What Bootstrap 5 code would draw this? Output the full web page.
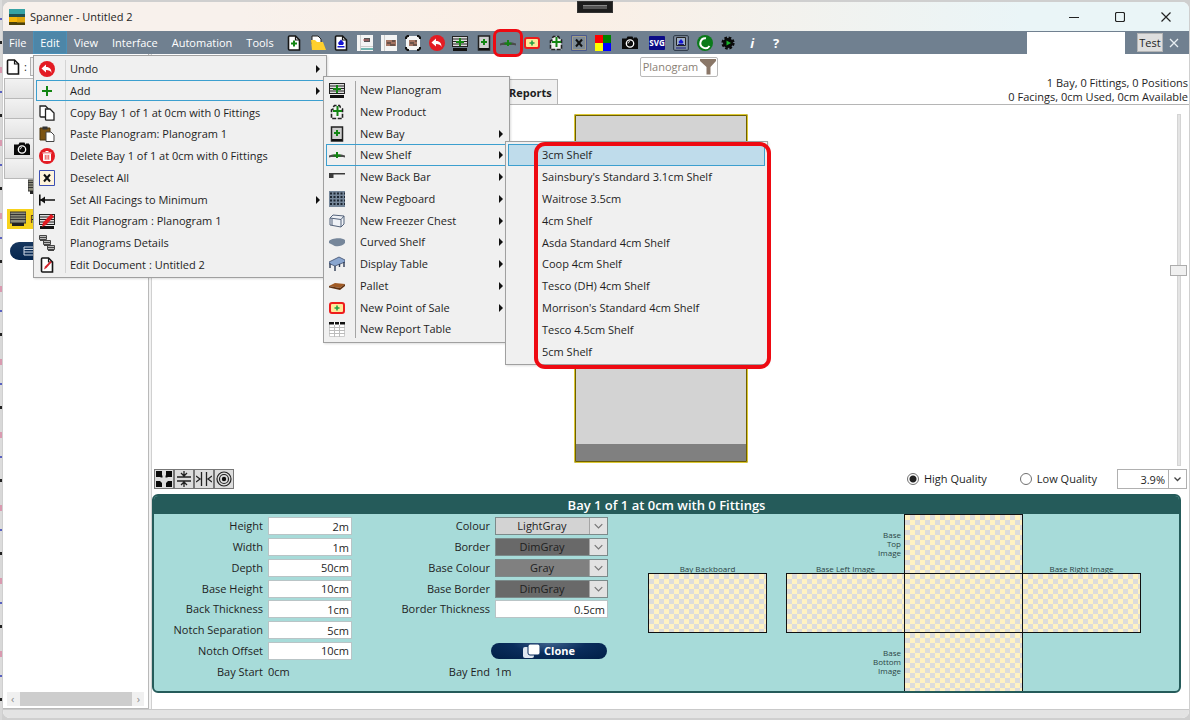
<!DOCTYPE html>
<html lang="en">
<head>
<meta charset="utf-8">
<meta name="viewport" content="width=device-width, initial-scale=1">
<title>Spanner - Untitled 2</title>
<link href="https://cdn.jsdelivr.net/npm/bootstrap@5.3.0/dist/css/bootstrap.min.css" rel="stylesheet">
<style>
  :root { --slate:#708090; --teal:#a7dbd9; --teal-dark:#255b5a; --menu:#f0f0f0; --edge:#a0a0a0; --hot:#3c9fcf; }
  body { font-family:"Open Sans","Noto Sans",sans-serif; font-size:11px; line-height:16px; color:#1e1e1e;
    padding:2px 1px 2px 3px; background:repeating-linear-gradient(#dcdcdc 0 18px,#5a62c0 18px 20px,#dcdcdc 20px 41px,#222 41px 44px,#d8d8d8 44px 67px,#d99ab0 67px 73px) left/2px 100% no-repeat #cfcfcf; }
  button, input, select { font:inherit; color:inherit; }
  svg { display:block; flex:none; }
  .ico { width:16px; height:16px; }
  .app-window { height:calc(100vh - 4px); min-height:600px; background:#fff; border-radius:7px; overflow:hidden; }
  .title-bar { height:29px; padding-left:6px; gap:5px; background:linear-gradient(90deg,#f8f1ec 20%,#fbefe5 48%,#eaf5f7 86%); }
  .title-bar button { width:46px; height:29px; border:0; background:none; display:grid; place-items:center; padding:0; }
  .notch { width:36px; height:12px; top:1px; left:50%; transform:translateX(-50%); background:#1c1c1c; border:1px solid #333; z-index:5; }
  .notch::after { content:""; position:absolute; inset:3px 5px; background:#555; border-top:1px solid #888; }
  .menu-bar { height:23px; background:var(--slate); }
  .top-item { height:23px; padding:0 7px; color:#fff; background:none; border:0; }
  .top-item.first { width:30px; padding:0 4px 0 6px; text-align:left; }
  .top-item.open { width:34px; background:#4d86a8; border:1px solid #4a90b8; padding:0; display:block; }
  .menu-titles { width:279px; }
  .tool-strip { width:506px; }
  .tool-strip button { flex:1 1 0; height:23px; padding:0; border:0; background:none; display:grid; place-items:center; position:relative; }
  .tool-strip .wide { flex:0 0 30px; }
  .tool-strip .glyph { font-size:13px; font-weight:700; color:#fff; }
  .ring { position:absolute; border:3px solid #ee0a12; border-radius:7px; inset:-2px -3px -3px; z-index:3; pointer-events:none; }
  .search-box { width:98px; height:22px; border:0; border-radius:0; background:#fff; }
  .test-btn { width:26px; height:19px; line-height:17px; margin-left:12px; padding:0; background:#dedede; border:1px solid #b5b5b5; }
  .close-btn { width:22px; height:22px; padding:0; border:0; background:none; display:grid; place-items:center; }

  .menu-pop { position:absolute; z-index:20; background:var(--menu); border:1px solid var(--edge); padding:2px; display:flex; flex-direction:column; margin:0; list-style:none; box-shadow:1px 1px 2px #0002; }
  .menu-pop > li { flex:1 1 0; position:relative; display:flex; }
  .menu-pop > li > button { flex:1; border:1px solid transparent; background:none; padding:1px 3px 0 2px; display:flex; align-items:center; text-align:left; white-space:nowrap; min-width:0; }
  .menu-pop > li > button > .ico { margin-right:15px; }
  .menu-pop > li > button.noicon { padding-left:33px; }
  .menu-pop > li > button.open { border-color:var(--hot); }
  .menu-pop > li > button.chosen { background:#bfdceb; border-color:var(--hot); }
  .menu-pop.ruled::before { content:""; position:absolute; left:31px; top:4px; bottom:4px; border-left:1px solid #d4d4d4; }
  .menu-pop.ruled.dark::before { border-color:#a5a5a5; }
  .more::after { content:""; margin-left:auto; border:4px solid transparent; border-left-color:#111; border-right:0; }
  .menu-edit { left:0; top:24px; width:294px; height:223px; }
  .menu-add { left:calc(100% - 1px); top:-4px; width:187px; height:267px; }
  .menu-shelf { left:calc(100% - 2px); top:-3px; width:263px; height:224px; }
  .menu-shelf::after { content:""; position:absolute; inset:0 -4px -5px 28px; border:4px solid #ee0a12; border-radius:11px; pointer-events:none; }

  .side { width:146px; border-right:1px solid #b9b9b9; border-bottom:1px solid #b9b9b9; padding-left:1px; }
  .splitter { width:3px; background:#f2f2f2; border-right:1px solid #d0d0d0; }
  .doc-row { height:25px; padding-left:1px; gap:3px; }
  .doc-name { width:110px; height:19px; border:1px solid #b0b0b0; border-radius:0; background:#f0f0f0; padding:0 3px; }
  .side-btn { height:21px; margin-top:-1px; border:1px solid #b9b9b9; background:linear-gradient(#f2f2f2,#e2e2e2); padding:0 0 0 9px; }
  .tree-top { padding:0 0 14px 24px; }
  .tree-sel { background:#f7d21b; height:20px; width:120px; margin-left:3px; padding-left:3px; gap:4px; }
  .tree-pill { height:18px; width:120px; background:linear-gradient(#17375e,#04264f); border-radius:9px; margin:13px 0 0 6px; padding-left:12px; }
  .hscroll { height:14px; margin:0 4px 2px 3px; background:#f0f0f0; color:#8a8a8a; }
  .hscroll i { background:#cdcdcd; height:14px; flex:0 1 112px; }

  .filter-row { height:25px; padding-left:17px; }
  .filter-box { height:20px; border:1px solid #b9b9b9; border-radius:2px; color:#8a7f75; background:#fff; padding:0 1px 0 2px; gap:2px; }
  .tab-row { height:26px; border-bottom:1px solid #b5b5b5; padding-left:340px; }
  .tab-rep { border:1px solid #b5b5b5; border-bottom:0; background:#f0f0f0; font-weight:700; padding:2px 5px 0 16px; height:25px; }
  .tallies { font-size:11px; line-height:14px; margin-top:-3px; padding-right:1px; }
  .bay { height:100%; aspect-ratio:1/2; background:#d3d3d3; border:2px solid #6e5f00; outline:1px solid #dcc832; outline-offset:-1px; border-radius:2px; }
  .bay div { height:17px; background:#808080; }
  .canvas-row { min-height:0; padding-top:9px; }
  .bay-space { padding:0 0 3px 2px; }
  .vslide { width:21px; }
  .vslide .groove { width:4px; background:#e4e4e4; border:1px solid #d4d4d4; }
  .vslide .knob { width:17px; height:11px; top:43%; background:#f0f0f0; border:1px solid #acacac; }
  .view-row { padding:3px 2px 5px; }
  .grid-btns button { width:20px; height:20px; border:1px solid #777; background:#ddd; padding:0; display:grid; place-items:center; }
  .quality { gap:5px; margin-right:20px; }
  .quality + .quality { margin-left:13px; }
  .quality input { appearance:none; width:12px; height:12px; margin:0; border:1px solid #707070; border-radius:50%; background:#fff; }
  .quality input:checked { background:radial-gradient(#222 0 3px,#fff 4px); }
  .zoom-in { width:52px; height:20px; border:1px solid #b0b0b0; border-radius:0; text-align:right; padding:0 3px; }
  .zoom-dd { width:18px; height:20px; border:1px solid #b0b0b0; border-left:0; background:#fff; padding:0; display:grid; place-items:center; }

  .props { border:2px solid var(--teal-dark); border-radius:6px; background:var(--teal); overflow:hidden; margin-right:8px; }
  .props h2 { background:var(--teal-dark); color:#fff; font-size:13px; line-height:18px; font-weight:600; margin:0; text-align:center; }
  .fields { display:grid; grid-template-rows:repeat(8,1fr); height:166px; align-items:center; column-gap:5px; margin-top:2px; }
  .fields label, .fields span { text-align:right; }
  .fields .plain { text-align:left; }
  .fields-a { grid-template-columns:109px 84px; }
  .fields-b { grid-template-columns:100px 113px; margin-left:38px; }
  .fields input { width:100%; height:18px; border:1px solid #b9c4c6; border-radius:0; background:#fff; text-align:right; padding:0 2px; }
  .pick { position:relative; height:18px; }
  .pick select { width:100%; height:18px; line-height:16px; appearance:none; border:1px solid #7b8a8a; border-radius:0; padding:0 19px 0 0; text-align:center; text-align-last:center; display:block; }
  .pick svg { position:absolute; right:1px; top:1px; width:18px; height:16px; background:#e2e2e2; border-left:1px solid #a5a5a5; pointer-events:none; }
  .clone { width:116px; height:16px; line-height:16px; margin-left:-4px; border:0; border-radius:8px; color:#fff; font-weight:700; padding:0; background:radial-gradient(ellipse at 50% 0,#3d618c 0,#0a2d5c 45%,#001f47); }
  .faces { display:grid; grid-template-columns:118px 20px repeat(3,118px); grid-template-rows:repeat(3,59px); margin-left:40px; font-size:8px; line-height:9px; color:#2c4444; }
  .face { position:relative; margin:0 -1px -1px 0; border:1px solid #111; background:repeating-conic-gradient(#dcdcdc 0 25%,#fff2c2 0 50%) 0 0/10px 10px; }
  .cap { position:absolute; bottom:100%; left:0; right:0; text-align:center; padding-bottom:1px; }
  .cap-side { align-self:center; text-align:right; padding-right:3px; }
  .main-end { height:16px; }
  .foot { height:9px; background:#e3e3e3; border-top:1px solid #c9c9c9; }
</style>
</head>
<body>

<svg width="0" height="0" class="position-absolute" aria-hidden="true">
  <symbol id="plus" viewBox="0 0 16 16"><path d="M8 3v10M3 8h10" stroke="#128512" stroke-width="2"/></symbol>
  <symbol id="page" viewBox="0 0 16 16"><path d="M3.500 1h6l4 4v10h-10q-1 0-1-1V2q0-1 1-1z" fill="#fff" stroke="#161616" stroke-width="1.600"/><path d="M9.500 1v4h4" fill="none" stroke="#161616" stroke-width="1.200"/></symbol>
  <symbol id="newdoc" viewBox="0 0 16 16"><use href="#page"/><path d="M8 5.500v6M5 8.500h6" stroke="#128512" stroke-width="2"/></symbol>
  <symbol id="folder" viewBox="0 0 16 16"><path d="M2 1h6l3 3v5H2z" fill="#fff" stroke="#222"/><path d="M1 5h4l2 2h6l3 8H2z" fill="#ffd02e"/></symbol>
  <symbol id="savedoc" viewBox="0 0 16 16"><use href="#page"/><path d="M8 4.500l3 3.500-1 2H6L5 8zM4.500 11h7v1.500h-7z" fill="#1414d2"/></symbol>
  <symbol id="sheet1" viewBox="0 0 16 16"><path d="M0 0h16v16H0z" fill="#f4f4f4"/><path d="M3.500 0v16M3 11.500h13" stroke="#ccc"/><path d="M7 3h6v4H7z" fill="#555"/><path d="M4 13h12v2H4z" fill="#6fb5b0"/><path d="M6 5h6" stroke="#c66"/></symbol>
  <symbol id="sheet2" viewBox="0 0 16 16"><path d="M0 0h16v16H0z" fill="#f4f4f4"/><path d="M3.500 0v16" stroke="#ccc"/><path d="M5 5h10v6H5z" fill="#a47463"/><path d="M6 8h4m1-2h3M9 10h5" stroke="#333"/></symbol>
  <symbol id="sheet3" viewBox="0 0 16 16"><path d="M1 1h14v14H1z" fill="#f4f4f4"/><path d="M4 5h8v6H4z" fill="#a47463"/><path d="M5 8h4m1-2h2M8 10h4" stroke="#333"/><path d="M1 4V2.500L2.500 1H4m8 0h1.500L15 2.500V4m0 8v1.500L13.500 15H12m-8 0H2.500L1 13.500V12" fill="none" stroke="#111" stroke-width="2"/></symbol>
  <symbol id="undo" viewBox="0 0 16 16"><circle cx="8" cy="8" r="8" fill="#e31b23"/><path d="M7 3.500V6c4 0 5.500 2.500 5.500 6C11.500 9.800 10 9 7 9v2.500L2.500 7.500z" fill="#fff"/></symbol>
  <symbol id="plano" viewBox="0 0 16 16"><path d="M0 1h16v11H0z" fill="#ddd"/><path d="M0 1.500h16M0 4h16M0 6.500h16M0 9h16M0 11.500h16M.5 1v11M15.500 1v11" stroke="#222"/><path d="M1 13h14v3H1z" fill="#111"/><path d="M8 3v8M4 7h8" stroke="#128512" stroke-width="2"/></symbol>
  <symbol id="bay" viewBox="0 0 16 16"><path d="M2.500 1h11v14h-11z" fill="#cfcfcf" stroke="#222" stroke-width="1.500"/><path d="M3 13h10v2H3z" fill="#111"/><path d="M8 4v6M5 7h6" stroke="#128512" stroke-width="2"/></symbol>
  <symbol id="shelf" viewBox="0 0 16 16"><path d="M0 8.500L3.500 7.500h9L16 8.500v2L14 10H2l-2 .5z" fill="#4c4c4c"/><path d="M8 5v6M4.500 8.500h7" stroke="#128512" stroke-width="2"/></symbol>
  <symbol id="pos" viewBox="0 0 16 16"><rect x="1" y="3" width="14" height="10" rx="2" fill="#ffe89a" stroke="#ee1c1c" stroke-width="2"/><path d="M8 5.500v5M5.500 8h5" stroke="#22a045" stroke-width="1.600"/></symbol>
  <symbol id="product" viewBox="0 0 16 16"><path d="M4 5l-1.500 1v8.500h11V5l-2-1.500-1-2h-5L4 3.500z" fill="#f2f2f2" stroke="#222" stroke-width="1.600" stroke-dasharray="4 1.500"/><path d="M8.500 2v10M4 7h9" stroke="#128512" stroke-width="2"/></symbol>
  <symbol id="desel" viewBox="0 0 16 16"><path d="M.5.5h15v15H.5z" fill="#fff4dc" stroke="#3b4fb4"/><path d="M5 4.500l6 7M11 4.500l-6 7" stroke="#111" stroke-width="2"/></symbol>
  <symbol id="deselbar" viewBox="0 0 16 16"><path d="M.5.5h15v15H.5z" fill="#7d8a96" stroke="#4a5a90"/><path d="M1.500 1.500h13v13h-13z" fill="none" stroke="#a39c88"/><path d="M5 4.500l6 7M11 4.500l-6 7" stroke="#111" stroke-width="2"/></symbol>
  <symbol id="four" viewBox="0 0 16 16"><path d="M0 0h8v8H0z" fill="#f00"/><path d="M8 0h8v8H8z" fill="#008000"/><path d="M0 8h8v8H0z" fill="#ff0"/><path d="M8 8h8v8H8z" fill="#00f"/></symbol>
  <symbol id="camera" viewBox="0 0 16 16"><path d="M0 3.500h4.500l1-2h5l1 2H12V2.500h3v1h1V14H0z" fill="#0a0a0a"/><circle cx="8" cy="8.500" r="3.700" fill="none" stroke="#fff" stroke-width="1.300"/><path d="M8 6.500a2 2 0 0 0-2 2" stroke="#fff" fill="none" stroke-width=".8"/></symbol>
  <symbol id="monitor" viewBox="0 0 16 16"><rect x=".7" y=".7" width="14.600" height="14.600" rx="1" fill="#8390a0" stroke="#222e3c"/><path d="M3.500 2.500h9v8h-9z" fill="#9fb0c8" stroke="#222"/><path d="M8 4l2.500 3-1 1.500h-3L5.500 7z" fill="#1414d2"/><path d="M5 9.500h6M3 13h10" stroke="#1c1c80" stroke-width="1.200"/></symbol>
  <symbol id="greenc" viewBox="0 0 16 16"><circle cx="8" cy="8" r="8" fill="#0a7a1a"/><path d="M9 3.200A5 5 0 1 0 12.500 11" fill="none" stroke="#fff" stroke-width="2"/></symbol>
  <symbol id="gear" viewBox="0 0 16 16"><circle cx="8" cy="8" r="5" fill="#0a0a0a"/><circle cx="8" cy="8" r="5.400" fill="none" stroke="#0a0a0a" stroke-width="2.400" stroke-dasharray="2.600 1.640"/><path d="M6.500 5.500L11 8l-4.500 2.500z" fill="#19b52a"/></symbol>
  <symbol id="copy" viewBox="0 0 16 16"><path d="M1 1h5.500L9 3.500V12H2q-1 0-1-1z" fill="#fff" stroke="#222" stroke-width="1.300"/><path d="M6.500 4H11l4 4v7.200H7.500q-1 0-1-1z" fill="#fff" stroke="#222" stroke-width="1.300"/></symbol>
  <symbol id="paste" viewBox="0 0 16 16"><path d="M1 2h10v12H1z" fill="#7b5312" stroke="#4a340c"/><path d="M3.500.5h5v3h-5z" fill="#333"/><path d="M7 6h5l3 3v6.500H7z" fill="#fff" stroke="#444"/></symbol>
  <symbol id="bin" viewBox="0 0 16 16"><circle cx="8" cy="8" r="8" fill="#e31b23"/><path d="M3.500 5h9M4.500 6h7v6.500h-7zM6.500 3.500h3" fill="#f9d5d7" stroke="#fff"/><path d="M6.500 7v4.500M8 7v4.500M9.500 7v4.500" stroke="#e77"/></symbol>
  <symbol id="facing" viewBox="0 0 16 16"><path d="M.8 2.500v11M1 8h15" stroke="#111" stroke-width="1.600"/><path d="M1 8l5-3.500v7z" fill="#111"/></symbol>
  <symbol id="editpl" viewBox="0 0 16 16"><path d="M0 1h16v11H0z" fill="#ddd"/><path d="M0 1.500h16M0 4h16M0 6.500h16M0 9h16M0 11.500h16M.5 1v11M15.500 1v11" stroke="#222"/><path d="M1 13h14v3H1z" fill="#111"/><path d="M3 14l1-4.500 8-8.500 3 2.500L7 12z" fill="#e11b22"/></symbol>
  <symbol id="details" viewBox="0 0 16 16"><g fill="#bbb" stroke="#444"><path d="M.5.5h7v4h-7zM4.500 5.500h7v4h-7zM8.500 10.500h7v4h-7z"/><path d="M1 2.500h6M5 7.500h6M9 12.500h6"/></g><path d="M1 4h6v2H1zM5 9h6v2H5zM9 14h6v2H9z" fill="#444"/></symbol>
  <symbol id="editdoc" viewBox="0 0 16 16"><use href="#page"/><path d="M5 12.500l1-3 5.500-5.500 1.200 1.200L7.500 11z" fill="#d3222a"/></symbol>
  <symbol id="backbar" viewBox="0 0 16 16"><path d="M0 4h16v1.500H4.500V9H0z" fill="#3a3a3a"/></symbol>
  <symbol id="peg" viewBox="0 0 16 16"><path d="M0 0h16v16H0z" fill="#76879a"/><path d="M0 2.500h16M0 6h16M0 9.500h16M0 13h16" stroke="#1c2632" stroke-width="1.800" stroke-dasharray="2 1.500" stroke-dashoffset="-1"/></symbol>
  <symbol id="freezer" viewBox="0 0 16 16"><path d="M1 5l3-3 11 1v8l-3 3L1 12zM1 5l11 1.500V14M12 6.500L15 3M3 5.500V12" fill="#eef1f6" stroke="#53627a"/></symbol>
  <symbol id="curved" viewBox="0 0 16 16"><path d="M0 7c2-3 13-4 16-1v3c-3 4-10 4-12 2L0 9z" fill="#76869a"/></symbol>
  <symbol id="dtable" viewBox="0 0 16 16"><path d="M0 6l10-5 6 3v2L6 10 0 7.500z" fill="#8aa6cf" stroke="#3c4d6c" stroke-width=".8"/><path d="M1 7.500V12M6 10v5M15 6v5M10.500 8v3" stroke="#2d3a54" stroke-width="1.400"/></symbol>
  <symbol id="pallet" viewBox="0 0 16 16"><path d="M0 8l6-3 10 1-5 4z" fill="#a05a24"/><path d="M0 8l11 2 5-4v2l-5 4L0 9.500z" fill="#5e2f0e"/></symbol>
  <symbol id="rtable" viewBox="0 0 16 16"><path d="M.5 1.500h15v14H.5z" fill="#fff" stroke="#ccc"/><path d="M0 6.500h16M0 9.500h16M0 12.500h16M5.500 3v13M10.500 3v13" stroke="#bbb"/><path d="M0 1h16v2.500H0z" fill="#111"/><path d="M5.500 1v3M10.500 1v3" stroke="#fff"/></symbol>
  <symbol id="rack" viewBox="0 0 16 16"><path d="M0 1h16v11H0z" fill="#8b8b7a" stroke="#333"/><path d="M0 3.500h16M0 6h16M0 8.500h16" stroke="#333"/><path d="M2 12h12v3H2z" fill="#222"/></symbol>
</svg>

<div class="notch position-absolute"></div>

<div class="app-window d-flex flex-column">
  <header class="title-bar d-flex align-items-center">
    <svg width="16" height="16" viewBox="0 0 16 16"><path d="M0 0h16v6H0z" fill="#38a3a5"/><path d="M0 5h16v3H0z" fill="#23504f"/><path d="M0 8h16v6H0z" fill="#f5b50a"/><path d="M0 13h16v3H0z" fill="#4d420c"/><path d="M8 8h8v6H8z" fill="#c9960c" opacity=".5"/></svg>
    <span>Spanner - Untitled 2</span>
    <div class="ms-auto d-flex">
      <button aria-label="Minimise"><svg width="10" height="10"><path d="M0 5.500h10" stroke="#222"/></svg></button>
      <button aria-label="Maximise"><svg width="10" height="10"><rect x=".5" y=".5" width="9" height="9" rx="1.500" fill="none" stroke="#222" stroke-width="1.200"/></svg></button>
      <button aria-label="Close"><svg width="10" height="10"><path d="M.5.5l9 9M9.500.5l-9 9" stroke="#222" stroke-width="1.200"/></svg></button>
    </div>
  </header>

  <nav class="menu-bar d-flex align-items-center">
    <div class="menu-titles d-flex">
      <button class="top-item first">File</button>
      <div class="position-relative">
        <button class="top-item open">Edit</button>
        <ul class="menu-pop menu-edit ruled">
          <li><button class="more"><svg class="ico"><use href="#undo"/></svg>Undo</button></li>
          <li><button class="more open"><svg class="ico"><use href="#plus"/></svg>Add</button>
            <ul class="menu-pop menu-add ruled dark">
              <li><button><svg class="ico"><use href="#plano"/></svg>New Planogram</button></li>
              <li><button><svg class="ico"><use href="#product"/></svg>New Product</button></li>
              <li><button class="more"><svg class="ico"><use href="#bay"/></svg>New Bay</button></li>
              <li><button class="more open"><svg class="ico"><use href="#shelf"/></svg>New Shelf</button>
                <ul class="menu-pop menu-shelf">
                  <li><button class="noicon chosen">3cm Shelf</button></li>
                  <li><button class="noicon">Sainsbury's Standard 3.1cm Shelf</button></li>
                  <li><button class="noicon">Waitrose 3.5cm</button></li>
                  <li><button class="noicon">4cm Shelf</button></li>
                  <li><button class="noicon">Asda Standard 4cm Shelf</button></li>
                  <li><button class="noicon">Coop 4cm Shelf</button></li>
                  <li><button class="noicon">Tesco (DH) 4cm Shelf</button></li>
                  <li><button class="noicon">Morrison's Standard 4cm Shelf</button></li>
                  <li><button class="noicon">Tesco 4.5cm Shelf</button></li>
                  <li><button class="noicon">5cm Shelf</button></li>
                </ul>
              </li>
              <li><button class="more"><svg class="ico"><use href="#backbar"/></svg>New Back Bar</button></li>
              <li><button class="more"><svg class="ico"><use href="#peg"/></svg>New Pegboard</button></li>
              <li><button class="more"><svg class="ico"><use href="#freezer"/></svg>New Freezer Chest</button></li>
              <li><button class="more"><svg class="ico"><use href="#curved"/></svg>Curved Shelf</button></li>
              <li><button class="more"><svg class="ico"><use href="#dtable"/></svg>Display Table</button></li>
              <li><button class="more"><svg class="ico"><use href="#pallet"/></svg>Pallet</button></li>
              <li><button class="more"><svg class="ico"><use href="#pos"/></svg>New Point of Sale</button></li>
              <li><button><svg class="ico"><use href="#rtable"/></svg>New Report Table</button></li>
            </ul>
          </li>
          <li><button><svg class="ico"><use href="#copy"/></svg>Copy Bay 1 of 1 at 0cm with 0 Fittings</button></li>
          <li><button><svg class="ico"><use href="#paste"/></svg>Paste Planogram: Planogram 1</button></li>
          <li><button><svg class="ico"><use href="#bin"/></svg>Delete Bay 1 of 1 at 0cm with 0 Fittings</button></li>
          <li><button><svg class="ico"><use href="#desel"/></svg>Deselect All</button></li>
          <li><button class="more"><svg class="ico"><use href="#facing"/></svg>Set All Facings to Minimum</button></li>
          <li><button><svg class="ico"><use href="#editpl"/></svg>Edit Planogram : Planogram 1</button></li>
          <li><button><svg class="ico"><use href="#details"/></svg>Planograms Details</button></li>
          <li><button><svg class="ico"><use href="#editdoc"/></svg>Edit Document : Untitled 2</button></li>
        </ul>
      </div>
      <button class="top-item">View</button>
      <button class="top-item">Interface</button>
      <button class="top-item">Automation</button>
      <button class="top-item">Tools</button>
    </div>
    <div class="tool-strip d-flex">
      <button aria-label="New"><svg class="ico"><use href="#newdoc"/></svg></button>
      <button aria-label="Open"><svg class="ico"><use href="#folder"/></svg></button>
      <button aria-label="Save"><svg class="ico"><use href="#savedoc"/></svg></button>
      <button aria-label="Layout"><svg class="ico"><use href="#sheet1"/></svg></button>
      <button aria-label="Side view"><svg class="ico"><use href="#sheet2"/></svg></button>
      <button aria-label="Full view"><svg class="ico"><use href="#sheet3"/></svg></button>
      <button aria-label="Undo"><svg class="ico"><use href="#undo"/></svg></button>
      <button aria-label="New planogram"><svg class="ico"><use href="#plano"/></svg></button>
      <button aria-label="New bay"><svg class="ico"><use href="#bay"/></svg></button>
      <button aria-label="New shelf"><svg class="ico"><use href="#shelf"/></svg><span class="ring"></span></button>
      <button aria-label="New point of sale"><svg class="ico"><use href="#pos"/></svg></button>
      <button aria-label="New product"><svg class="ico"><use href="#product"/></svg></button>
      <button aria-label="Deselect"><svg class="ico"><use href="#deselbar"/></svg></button>
      <button aria-label="Colours"><svg class="ico"><use href="#four"/></svg></button>
      <button aria-label="Snapshot" class="wide"><svg class="ico"><use href="#camera"/></svg></button>
      <button aria-label="SVG"><svg class="ico" viewBox="0 0 16 16"><rect y="1" width="16" height="14" rx="1" fill="#0b0b86"/><text x="8" y="11" text-anchor="middle" font-size="8" font-weight="700" fill="#fff">SVG</text></svg></button>
      <button aria-label="Monitor"><svg class="ico"><use href="#monitor"/></svg></button>
      <button aria-label="Refresh"><svg class="ico"><use href="#greenc"/></svg></button>
      <button aria-label="Run"><svg class="ico"><use href="#gear"/></svg></button>
      <button class="glyph fst-italic">i</button>
      <button class="glyph">?</button>
    </div>
    <input class="search-box ms-auto" aria-label="Search">
    <button class="test-btn">Test</button>
    <button class="close-btn" aria-label="Close test"><svg width="10" height="10"><path d="M1 1l8 8M9 1L1 9" stroke="#e8eef2" stroke-width="1.300"/></svg></button>
    <span class="ps-1"></span>
  </nav>

  <div class="d-flex flex-grow-1">
    <aside class="side d-flex flex-column">
      <div class="doc-row d-flex align-items-center">
        <svg class="ico"><use href="#page"/></svg><span>:</span>
        <input class="doc-name" value="Untitled 2" aria-label="Document name">
      </div>
      <button class="side-btn" aria-label="Tool 1"></button>
      <button class="side-btn" aria-label="Tool 2"></button>
      <button class="side-btn" aria-label="Tool 3"></button>
      <button class="side-btn" aria-label="Camera"><svg class="ico"><use href="#camera"/></svg></button>
      <button class="side-btn" aria-label="Tool 5"></button>
      <div class="tree-top"><svg class="ico"><use href="#rack"/></svg></div>
      <div class="tree-sel d-flex align-items-center"><svg class="ico"><use href="#rack"/></svg>P</div>
      <div class="tree-pill d-flex align-items-center"><svg width="14" height="12"><path d="M2 2h12v8H2zM2 4.500h12M2 7h12" fill="none" stroke="#cfd9e6"/></svg></div>
      <div class="hscroll d-flex justify-content-between align-items-center mt-auto px-1"><span>‹</span><i></i><span>›</span></div>
    </aside>
    <div class="splitter"></div>

    <main class="flex-grow-1 d-flex flex-column">
      <div class="filter-row d-flex justify-content-center align-items-center">
        <button class="filter-box d-flex align-items-center">Planogram<svg width="16" height="16"><path d="M0 0h16v2l-5.500 6v7.500h-4V8L0 2z" fill="#8a7768"/></svg></button>
      </div>
      <div class="tab-row d-flex justify-content-between">
        <button class="tab-rep">Reports</button>
        <div class="tallies text-end">1 Bay, 0 Fittings, 0 Positions<br>0 Facings, 0cm Used, 0cm Available</div>
      </div>
      <section class="canvas-row flex-grow-1 d-flex">
        <div class="bay-space flex-grow-1 d-flex justify-content-center">
          <div class="bay d-flex flex-column justify-content-end"><div></div></div>
        </div>
        <div class="vslide d-flex position-relative justify-content-center">
          <div class="groove"></div><div class="knob position-absolute"></div>
        </div>
      </section>
      <div class="view-row d-flex align-items-center">
        <div class="grid-btns d-flex">
          <button aria-label="Fit"><svg class="ico"><path d="M0 0h6v4l2 2-2 2-2-2H0zM16 0h-6v4L8 6l2 2 2-2h4zM0 16h6v-4l-2-2H0zM16 16h-6v-4l2-2h4z" fill="#0a0a0a"/><path d="M8 0v16M0 8h16" stroke="#ddd" stroke-width="3"/></svg></button>
          <button aria-label="Squeeze vertically"><svg class="ico"><path d="M1 6h14M1 10h14M8 0v5M5 2l3 3 3-3M8 16v-5M5 14l3-3 3 3" stroke="#222" fill="none" stroke-width="1.300"/></svg></button>
          <button aria-label="Squeeze horizontally"><svg class="ico"><path d="M5.500 1v14M10.500 1v14M0 5l4 3-4 3M16 5l-4 3 4 3" stroke="#222" fill="none" stroke-width="1.300"/></svg></button>
          <button aria-label="Target"><svg class="ico"><g fill="none" stroke="#222" stroke-width="1.200"><circle cx="8" cy="8" r="7"/><circle cx="8" cy="8" r="4.500"/></g><circle cx="8" cy="8" r="2.200" fill="#111"/></svg></button>
        </div>
        <label class="quality d-flex align-items-center ms-auto"><input type="radio" name="q" checked>High Quality</label>
        <label class="quality d-flex align-items-center"><input type="radio" name="q">Low Quality</label>
        <div class="d-flex"><input class="zoom-in" value="3.9%" aria-label="Zoom"><button class="zoom-dd" aria-label="Zoom levels"><svg width="7" height="5"><path d="M.5.5l3 3 3-3" fill="none" stroke="#444" stroke-width="1.300"/></svg></button></div>
      </div>

      <section class="props">
        <h2>Bay 1 of 1 at 0cm with 0 Fittings</h2>
        <div class="d-flex">
          <div class="fields fields-a">
            <label for="h">Height</label><input id="h" value="2m">
            <label for="w">Width</label><input id="w" value="1m">
            <label for="d">Depth</label><input id="d" value="50cm">
            <label for="bh">Base Height</label><input id="bh" value="10cm">
            <label for="bt">Back Thickness</label><input id="bt" value="1cm">
            <label for="ns">Notch Separation</label><input id="ns" value="5cm">
            <label for="no">Notch Offset</label><input id="no" value="10cm">
            <span>Bay Start</span><span class="plain">0cm</span>
          </div>
          <div class="fields fields-b">
            <label for="c1">Colour</label><div class="pick"><select id="c1" style="background:#d3d3d3"><option>LightGray</option></select><svg viewBox="0 0 18 16"><path d="M5 6l4 4 4-4" fill="none" stroke="#777" stroke-width="1.300"/></svg></div>
            <label for="c2">Border</label><div class="pick"><select id="c2" style="background:#696969"><option>DimGray</option></select><svg viewBox="0 0 18 16"><path d="M5 6l4 4 4-4" fill="none" stroke="#777" stroke-width="1.300"/></svg></div>
            <label for="c3">Base Colour</label><div class="pick"><select id="c3" style="background:#808080"><option>Gray</option></select><svg viewBox="0 0 18 16"><path d="M5 6l4 4 4-4" fill="none" stroke="#777" stroke-width="1.300"/></svg></div>
            <label for="c4">Base Border</label><div class="pick"><select id="c4" style="background:#696969"><option>DimGray</option></select><svg viewBox="0 0 18 16"><path d="M5 6l4 4 4-4" fill="none" stroke="#777" stroke-width="1.300"/></svg></div>
            <label for="th">Border Thickness</label><input id="th" value="0.5cm">
            <span></span><span></span>
            <span></span><button class="clone d-flex align-items-center justify-content-center gap-1"><svg width="17" height="14"><rect x="0" y="3" width="11" height="11" rx="2" fill="#dfe7f0"/><rect x="5" y="0" width="12" height="11" rx="2" fill="#fff" stroke="#0a2d5c"/></svg>Clone</button>
            <span>Bay End</span><span class="plain">1m</span>
          </div>
          <div class="faces">
            <div class="face" style="grid-area:2/1"><span class="cap">Bay Backboard</span></div>
            <div class="cap-side" style="grid-area:1/3">Base<br>Top<br>Image</div>
            <div class="face" style="grid-area:1/4"></div>
            <div class="face" style="grid-area:2/3"><span class="cap">Base Left Image</span></div>
            <div class="face" style="grid-area:2/4"></div>
            <div class="face" style="grid-area:2/5"><span class="cap">Base Right Image</span></div>
            <div class="cap-side" style="grid-area:3/3">Base<br>Bottom<br>Image</div>
            <div class="face" style="grid-area:3/4"></div>
          </div>
        </div>
      </section>
      <div class="main-end"></div>
    </main>
  </div>
  <footer class="foot"></footer>
</div>
<script src="https://cdn.jsdelivr.net/npm/bootstrap@5.3.0/dist/js/bootstrap.bundle.min.js"></script>
</body>
</html>
